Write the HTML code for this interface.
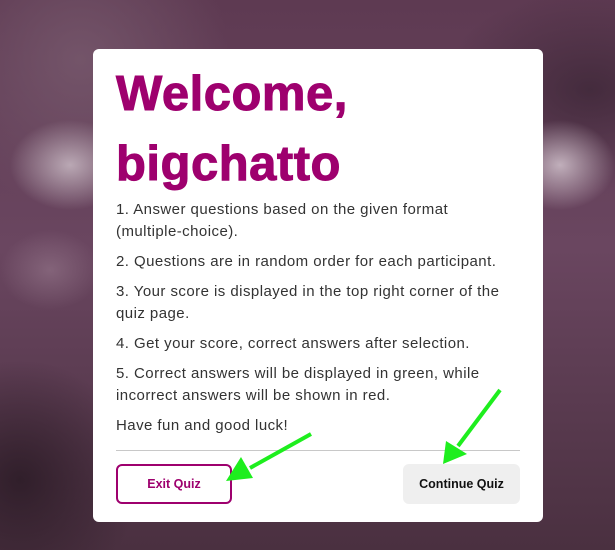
<!DOCTYPE html>
<html><head><style>
html,body{margin:0;padding:0;width:615px;height:550px;overflow:hidden;}
body{position:relative;font-family:"Liberation Sans",sans-serif;
background:
radial-gradient(ellipse 60px 45px at 70px 165px, rgba(200,185,195,.85), transparent),
radial-gradient(ellipse 55px 45px at 560px 165px, rgba(210,195,205,.85), transparent),
radial-gradient(ellipse 50px 40px at 50px 270px, rgba(150,120,140,.6), transparent),
radial-gradient(ellipse 120px 120px at 20px 480px, rgba(40,25,35,.8), transparent),
radial-gradient(ellipse 150px 100px at 590px 90px, rgba(55,35,50,.7), transparent),
radial-gradient(ellipse 150px 150px at 80px 60px, rgba(120,90,110,.8), transparent),
linear-gradient(180deg,#5e3a52 0%,#6a4660 45%,#4a3040 100%);}
.card{position:absolute;left:93px;top:49px;width:450px;height:473px;background:#fff;border-radius:6px;}
h1{position:absolute;left:23px;top:10px;margin:0;font-size:49px;font-weight:bold;color:#9e006e;line-height:70px;letter-spacing:0.5px;-webkit-text-stroke:1px #9e006e;}
.txt{position:absolute;left:23px;top:150px;width:392px;color:#333;font-size:15px;line-height:22px;letter-spacing:0.45px;}
.txt p{margin:0 0 8px 0;}
.hr{position:absolute;left:23px;top:401px;width:404px;height:1px;background:#c8c8c8;}
.exit{position:absolute;left:23px;top:415px;width:112px;height:36px;border:2px solid #9e006e;border-radius:6px;color:#9e006e;font-size:12.5px;font-weight:bold;text-align:center;line-height:36px;box-sizing:content-box;}
.cont{position:absolute;left:310px;top:415px;width:117px;height:40px;background:#efefef;border-radius:6px;color:#111;font-size:12.5px;font-weight:bold;text-align:center;line-height:40px;}
svg{position:absolute;left:0;top:0;}
</style></head><body>
<div class="card">
<h1>Welcome,<br>bigchatto</h1>
<div class="txt">
<p>1. Answer questions based on the given format (multiple-choice).</p>
<p>2. Questions are in random order for each participant.</p>
<p>3. Your score is displayed in the top right corner of the quiz page.</p>
<p>4. Get your score, correct answers after selection.</p>
<p>5. Correct answers will be displayed in green, while incorrect answers will be shown in red.</p>
<p>Have fun and good luck!</p>
</div>
<div class="hr"></div>
<div class="exit">Exit Quiz</div>
<div class="cont">Continue Quiz</div>
</div>
<svg width="615" height="550">
<line x1="311" y1="434" x2="250" y2="468" stroke="#1eee1e" stroke-width="4"/>
<polygon points="226,481 241,457 253,478" fill="#1eee1e"/>
<line x1="500" y1="390" x2="458" y2="446" stroke="#1eee1e" stroke-width="4"/>
<polygon points="443,464 446,441 467,454" fill="#1eee1e"/>
</svg>
</body></html>
